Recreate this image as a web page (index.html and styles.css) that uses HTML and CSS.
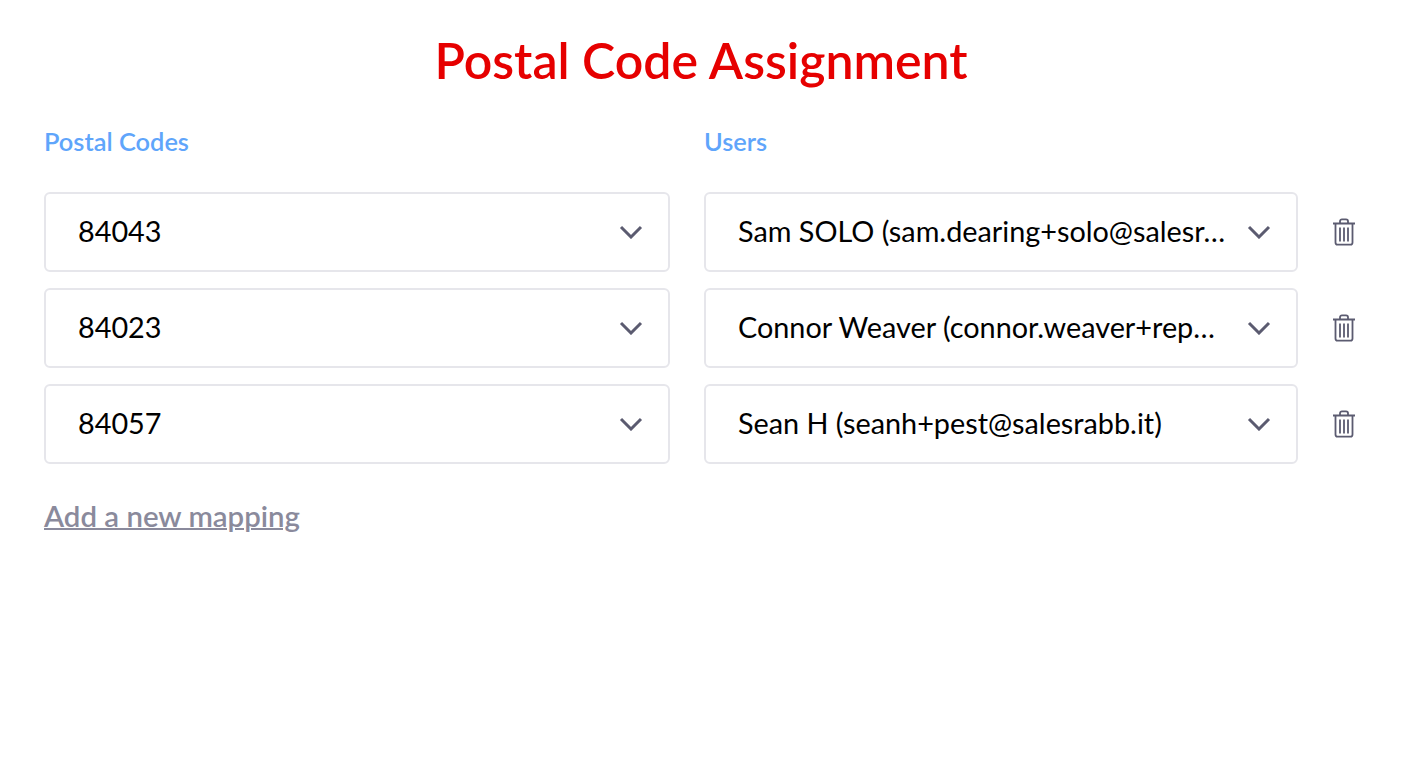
FILE: index.html
```html
<!DOCTYPE html>
<html lang="en">
  <head>
    <meta charset="UTF-8" />
    <title>Postal Code Assignment</title>
    <link rel="stylesheet" href="styles.css">
  </head>
  <body>
    <div class="page">
      <h1 class="title">Postal Code Assignment</h1>

      <div class="row labels">
        <div class="label">Postal Codes</div>
        <div class="label">Users</div>
      </div>

      <div class="row mapping">
        <div class="select"><span class="select-text">84043</span><svg class="chevron" viewBox="0 0 24 14"><path d="M2 2l10 10L22 2"/></svg></div>
        <div class="select"><span class="select-text">Sam SOLO (sam.dearing+solo@salesr…</span><svg class="chevron" viewBox="0 0 24 14"><path d="M2 2l10 10L22 2"/></svg></div>
        <svg class="trash" viewBox="0 0 24 28"><path d="M1 5.500h22M8 5V3.200C8 2 8.800 1.300 10 1.300h4c1.200 0 2 .7 2 1.900V5M3.500 6v18.500c0 1.300.8 2.200 2 2.200h13c1.200 0 2-.9 2-2.200V6M8 9.500v14M12 9.500v14M16 9.500v14"/></svg>
      </div>
      <div class="row mapping">
        <div class="select"><span class="select-text">84023</span><svg class="chevron" viewBox="0 0 24 14"><path d="M2 2l10 10L22 2"/></svg></div>
        <div class="select"><span class="select-text">Connor Weaver (connor.weaver+rep…</span><svg class="chevron" viewBox="0 0 24 14"><path d="M2 2l10 10L22 2"/></svg></div>
        <svg class="trash" viewBox="0 0 24 28"><path d="M1 5.500h22M8 5V3.200C8 2 8.800 1.300 10 1.300h4c1.200 0 2 .7 2 1.900V5M3.500 6v18.500c0 1.300.8 2.200 2 2.200h13c1.200 0 2-.9 2-2.200V6M8 9.500v14M12 9.500v14M16 9.500v14"/></svg>
      </div>
      <div class="row mapping">
        <div class="select"><span class="select-text">84057</span><svg class="chevron" viewBox="0 0 24 14"><path d="M2 2l10 10L22 2"/></svg></div>
        <div class="select"><span class="select-text">Sean H (seanh+pest@salesrabb.it)</span><svg class="chevron" viewBox="0 0 24 14"><path d="M2 2l10 10L22 2"/></svg></div>
        <svg class="trash" viewBox="0 0 24 28"><path d="M1 5.500h22M8 5V3.200C8 2 8.800 1.300 10 1.300h4c1.200 0 2 .7 2 1.900V5M3.500 6v18.500c0 1.300.8 2.200 2 2.200h13c1.200 0 2-.9 2-2.200V6M8 9.500v14M12 9.500v14M16 9.500v14"/></svg>
      </div>

      <a class="add-link" href="#">Add a new mapping</a>
    </div>
  </body>
</html>
```

FILE: styles.css
```css
/*global*/
* {
  margin: 0;
  padding: 0;
  box-sizing: border-box;
}

body {
  background-color: #fff;
  font-family: "Lato", "Noto Sans", sans-serif;
  color: #000;
}

/*layout*/
.page {
  padding: 29px 58px 0 44px;
}

.title {
  font-size: 50px;
  line-height: 62px;
  font-weight: 600;
  color: #e60000;
  text-align: center;
}

.row {
  display: grid;
  grid-template-columns: 626px 594px 24px;
  column-gap: 34px;
  align-items: center;
}

.labels {
  margin-top: 35px;
  margin-bottom: 36px;
}

.label {
  font-size: 25.400px;
  line-height: 30px;
  font-weight: 600;
  color: #5fa5fb;
}

.mapping {
  margin-bottom: 16px;
}

/*select*/
.select {
  height: 80px;
  border: 2px solid #e6e6eb;
  border-radius: 6px;
  padding: 0 25.500px 0 32px;
  display: flex;
  align-items: center;
  justify-content: space-between;
  gap: 20px;
  font-size: 28.800px;
}

.select-text {
  white-space: nowrap;
  overflow: hidden;
  text-overflow: ellipsis;
  padding-bottom: 2px;
}

.chevron {
  flex: none;
  width: 24px;
  height: 14px;
  fill: none;
  stroke: #5b5b70;
  stroke-width: 3;
}

.trash {
  width: 24px;
  height: 28px;
  fill: none;
  stroke: #5b5b70;
  stroke-width: 1.800;
}

/*link*/
.add-link {
  display: inline-block;
  margin-top: 17px;
  font-size: 29.400px;
  line-height: 38px;
  font-weight: 600;
  color: #8a8a9c;
  text-decoration: underline;
  text-decoration-thickness: 2px;
}
```
